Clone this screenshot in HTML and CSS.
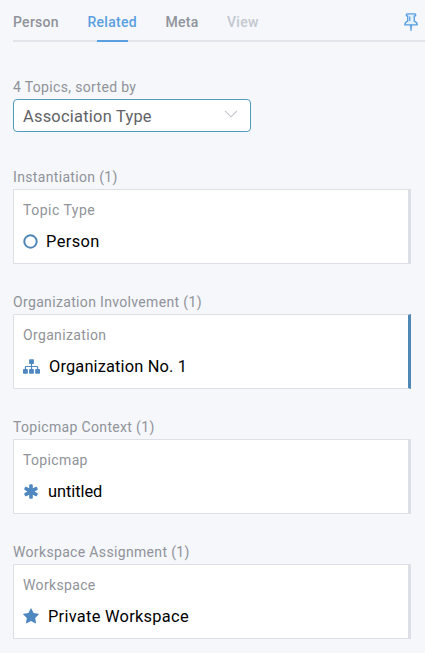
FILE: index.html
```html
<!DOCTYPE html>
<html lang="en">
<head>
<meta charset="utf-8">
<title>Related topics</title>
<link rel="stylesheet" href="styles.css">
</head>
<body>
<nav class="tabs">
  <span class="tab">Person</span>
  <span class="tab active">Related</span>
  <span class="tab">Meta</span>
  <span class="tab disabled">View</span>
  <svg class="pin" viewBox="0 0 14 18"><path class="pin-body" d="M3 .9h8c1 0 1 2.100 0 2.100h-.7v5.200c1.800.6 2.900 1.900 2.900 3.700H.8c0-1.800 1.100-3.100 2.900-3.700V3H3C2 3 2 .9 3 .9z"/><path class="pin-line" d="M5.700 3.500v4.500"/><path class="pin-tip" d="M6 12h2l-.7 6h-.5z"/></svg>
</nav>
<main>
  <div class="label">4 Topics, sorted by</div>
  <div class="select"><span>Association Type</span><svg class="chevron" viewBox="0 0 14 8"><path d="M1 .8l6 6 6-6"/></svg></div>
  <section class="group">
    <div class="label">Instantiation (1)</div>
    <div class="card">
      <div class="type spaced">Topic Type</div>
      <div class="topic person"><svg class="icon round" viewBox="0 0 15 15"><circle cx="7.500" cy="7.500" r="6.200"/></svg><span>Person</span></div>
    </div>
  </section>
  <section class="group">
    <div class="label">Organization Involvement (1)</div>
    <div class="card marked">
      <div class="type">Organization</div>
      <div class="topic"><svg class="icon wide" viewBox="0 0 1792 1792"><path d="M1792 1248v320q0 40-28 68t-68 28h-320q-40 0-68-28t-28-68v-320q0-40 28-68t68-28h96v-192h-512v192h96q40 0 68 28t28 68v320q0 40-28 68t-68 28h-320q-40 0-68-28t-28-68v-320q0-40 28-68t68-28h96v-192h-512v192h96q40 0 68 28t28 68v320q0 40-28 68t-68 28h-320q-40 0-68-28t-28-68v-320q0-40 28-68t68-28h96v-192q0-52 38-90t90-38h512v-192h-96q-40 0-68-28t-28-68v-320q0-40 28-68t68-28h320q40 0 68 28t28 68v320q0 40-28 68t-68 28h-96v192h512q52 0 90 38t38 90v192h96q40 0 68 28t28 68z"/></svg><span>Organization No. 1</span></div>
    </div>
  </section>
  <section class="group">
    <div class="label">Topicmap Context (1)</div>
    <div class="card">
      <div class="type">Topicmap</div>
      <div class="topic map"><svg class="icon" viewBox="64 0 1664 1792"><path d="M1546 1050q46 26 59.500 77.500t-12.500 97.500l-64 110q-26 46-77.500 59.500t-97.500-12.500l-266-153v307q0 52-38 90t-90 38h-128q-52 0-90-38t-38-90v-307l-266 153q-46 26-97.500 12.500t-77.500-59.500l-64-110q-26-46-12.500-97.500t59.500-77.500l266-154-266-154q-46-26-59.500-77.500t12.500-97.500l64-110q26-46 77.500-59.500t97.500 12.500l266 153v-307q0-52 38-90t90-38h128q52 0 90 38t38 90v307l266-153q46-26 97.500-12.500t77.500 59.500l64 110q26 46 12.500 97.500t-59.500 77.500l-266 154z"/></svg><span>untitled</span></div>
    </div>
  </section>
  <section class="group">
    <div class="label">Workspace Assignment (1)</div>
    <div class="card">
      <div class="type">Workspace</div>
      <div class="topic workspace"><svg class="icon" viewBox="64 0 1664 1792"><path d="M1728 647q0 22-26 48l-363 354 86 500q1 7 1 20 0 21-10.500 35.500t-30.500 14.500q-19 0-40-12l-449-236-449 236q-22 12-40 12-21 0-31.500-14.500t-10.500-35.500q0-6 2-20l86-500-364-354q-25-27-25-48 0-37 56-46l502-73 225-455q19-41 49-41t49 41l225 455 502 73q56 9 56 46z"/></svg><span>Private Workspace</span></div>
    </div>
  </section>
</main>
</body>
</html>
```
FILE: styles.css
```css
* { box-sizing: border-box; }
body {
  margin: 0;
  height: 653px;
  overflow: hidden;
  padding-left: 13px;
  background: #f5f7fb;
  font-family: Roboto, sans-serif;
  color: #000;
}
.tabs {
  display: flex;
  gap: 28.6px;
  height: 42px;
  padding-right: 7px;
  border-bottom: 2px solid #e1e4ea;
  font-size: 14px;
  line-height: 44px;
  font-weight: 500;
  letter-spacing: .27px;
  color: #909399;
}
.tab { position: relative; height: 42px; white-space: nowrap; }
.active { color: #5a9fe0; }
.active::after {
  content: "";
  position: absolute;
  left: 10px;
  width: 31px;
  bottom: 0;
  height: 2px;
  background: #5a9fe0;
}
.disabled { color: #c3c7cf; }
.pin { width: 14px; height: 18px; margin: 13px 0 0 auto; }
.pin-body { fill: #e2f1fc; stroke: #5a9fe0; stroke-width: 1.3; }
.pin-line { stroke: #5a9fe0; stroke-width: 1.2; }
.pin-tip { fill: #5a9fe0; stroke: #5a9fe0; stroke-width: .4; }
main { width: 398px; padding-top: 35px; }
.label {
  height: 22px;
  font-size: 14px;
  line-height: 20px;
  letter-spacing: .34px;
  color: #909399;
}
.select {
  display: flex;
  align-items: center;
  justify-content: space-between;
  width: 238px;
  height: 33px;
  padding: 1px 12px 0 9px;
  border: 1px solid #4f9cbc;
  border-radius: 4px;
  background: #fff;
  color: #606266;
  font-size: 16.4px;
  letter-spacing: .25px;
}
.chevron { width: 14px; height: 8px; margin-top: -4px; fill: none; stroke: #c0c4cc; stroke-width: 1.1; }
.group { height: 125px; }
.select + .group { margin-top: 35px; }
.card {
  height: 75px;
  padding: 10px 9px;
  border: 1px solid #dcdfe6;
  border-right-width: 3px;
  background: #fff;
}
.marked { border-right-color: #4f87b5; }
.type { font-size: 14px; line-height: 20px; letter-spacing: .35px; color: #909399; }
.spaced { letter-spacing: .5px; }
.topic { display: flex; align-items: center; height: 20px; margin-top: 11px; font-size: 16.4px; letter-spacing: .15px; }
.person { letter-spacing: .4px; }
.map { letter-spacing: -.05px; }
.workspace { letter-spacing: .28px; }
.icon { width: 16px; height: 17px; margin-right: 9px; fill: #4f88c0; }
.round { width: 15px; height: 15px; margin-right: 8px; fill: none; stroke: #4f87b8; stroke-width: 2; }
.wide { width: 17px; }
```
